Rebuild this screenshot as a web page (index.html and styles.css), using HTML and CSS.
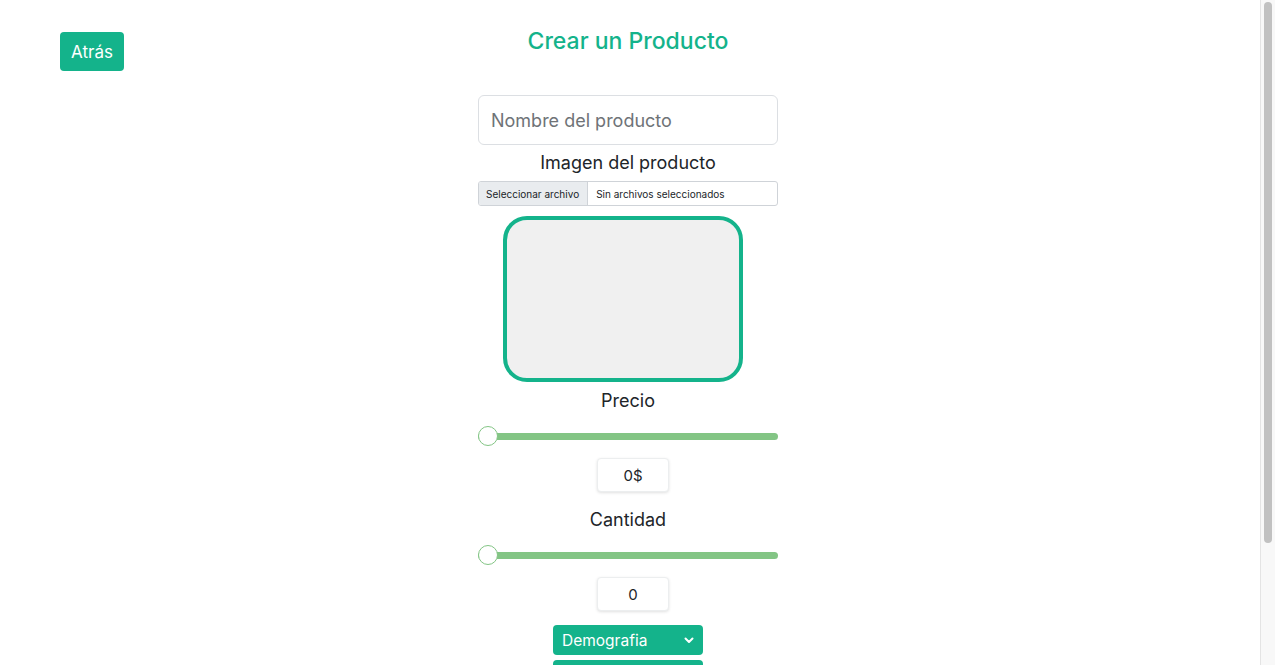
FILE: index.html
```html
<!DOCTYPE html>
<html lang="es">
<head>
<meta charset="utf-8">
<title>Crear un Producto</title>
<link rel="stylesheet" href="styles.css">
</head>
<body>
<div class="page">
  <header class="top">
    <button class="btn-back">Atrás</button>
    <h1 class="title">Crear un Producto</h1>
  </header>
  <form class="form">
    <input class="name-input" type="text" placeholder="Nombre del producto">
    <label class="label label-img">Imagen del producto</label>
    <div class="file">
      <span class="file-btn">Seleccionar archivo</span>
      <span class="file-name">Sin archivos seleccionados</span>
    </div>
    <div class="preview"></div>
    <label class="label label-price">Precio</label>
    <input class="range" type="range" min="0" max="100" value="0">
    <div class="value">0$</div>
    <label class="label label-qty">Cantidad</label>
    <input class="range" type="range" min="0" max="100" value="0">
    <div class="value">0</div>
    <div class="select">
      <span>Demografia</span>
      <svg width="10" height="7" viewBox="0 0 10 7"><path d="M1.5 1.5 L5 5 L8.5 1.5" fill="none" stroke="#fff" stroke-width="2" stroke-linecap="round" stroke-linejoin="round"/></svg>
    </div>
    <div class="select">
      <span>Categoría</span>
      <svg width="10" height="7" viewBox="0 0 10 7"><path d="M1.5 1.5 L5 5 L8.5 1.5" fill="none" stroke="#fff" stroke-width="2" stroke-linecap="round" stroke-linejoin="round"/></svg>
    </div>
    <button class="submit" type="button">Crear</button>
  </form>
</div>
<div class="scrollbar"><div class="scroll-thumb"></div></div>
</body>
</html>
```

FILE: styles.css
```css
html, body {
  margin: 0;
  padding: 0;
  background: #fff;
}
body {
  font-family: Inter, "Noto Sans", "Liberation Sans", sans-serif;
  color: #212529;
}
.page {
  padding-right: 19px;
  padding-bottom: 200px;
}
.top {
  position: relative;
  height: 95px;
}
.btn-back {
  position: absolute;
  left: 60px;
  top: 32px;
  width: 64px;
  height: 39px;
  border: none;
  border-radius: 4px;
  background: #14b38b;
  color: #fff;
  font-family: inherit;
  font-size: 17px;
  padding: 0;
}
.title {
  margin: 0;
  padding-top: 27px;
  text-align: center;
  font-weight: 500;
  font-size: 23px;
  line-height: 28px;
  color: #14b38b;
}
.form {
  display: flex;
  flex-direction: column;
  align-items: center;
}
.name-input {
  box-sizing: border-box;
  width: 300px;
  height: 50px;
  border: 1px solid #dcdfe3;
  border-radius: 6px;
  padding: 0 12px;
  font-family: inherit;
  font-size: 18px;
  color: #212529;
  outline: none;
}
.name-input::placeholder {
  color: #6f7377;
}
.label {
  display: block;
  font-size: 18px;
  line-height: 24px;
  text-align: center;
}
.label-img {
  margin-top: 6px;
  margin-bottom: 6px;
}
.file {
  box-sizing: border-box;
  width: 300px;
  height: 25px;
  border: 1px solid #cfd3d8;
  border-radius: 3px;
  display: flex;
  font-size: 10px;
  overflow: hidden;
}
.file-btn {
  background: #e9ecef;
  border-right: 1px solid #cfd3d8;
  padding: 0 8px 0 7px;
  display: flex;
  align-items: center;
  color: #212529;
}
.file-name {
  display: flex;
  align-items: center;
  padding-left: 8px;
}
.preview {
  box-sizing: border-box;
  width: 240px;
  height: 166px;
  margin-top: 10px;
  margin-right: 11px;
  border: 4px solid #14b38b;
  border-radius: 24px;
  background: #f0f0f0;
}
.label-price {
  margin-top: 7px;
}
.label-qty {
  margin-top: 16px;
}
.range {
  -webkit-appearance: none;
  appearance: none;
  width: 300px;
  height: 22px;
  margin: 12px 0 0;
  background: transparent;
}
.range::-webkit-slider-runnable-track {
  height: 7px;
  border-radius: 4px;
  background: #83c585;
}
.range::-webkit-slider-thumb {
  -webkit-appearance: none;
  width: 20px;
  height: 20px;
  margin-top: -7px;
  border-radius: 50%;
  background: #fff;
  border: 1px solid #83c585;
  box-sizing: border-box;
}
.value {
  box-sizing: border-box;
  width: 72px;
  height: 34px;
  margin-top: 11px;
  margin-left: 10px;
  border: 1px solid #eceeef;
  border-radius: 4px;
  box-shadow: 0 1px 3px rgba(0,0,0,0.12);
  display: flex;
  align-items: center;
  justify-content: center;
  font-size: 15px;
  background: #fff;
}
.select {
  box-sizing: border-box;
  width: 150px;
  height: 30px;
  margin-top: 14px;
  background: #14b38b;
  color: #fff;
  border-radius: 4px;
  display: flex;
  align-items: center;
  justify-content: space-between;
  padding: 0 9px 0 9px;
  font-size: 15.5px;
}
.select + .select {
  margin-top: 5px;
}
.submit {
  margin-top: 14px;
  width: 150px;
  height: 38px;
  border: none;
  border-radius: 4px;
  background: #14b38b;
  color: #fff;
  font-family: inherit;
  font-size: 16px;
}
.scrollbar {
  position: fixed;
  top: 0;
  right: 0;
  width: 14px;
  height: 100%;
  background: #f8f8f8;
  border-left: 1px solid #e4e4e4;
}
.scroll-thumb {
  margin: 2px 0 0 3px;
  width: 8px;
  height: 541px;
  border-radius: 4px;
  background: #c1c1c1;
}
```
